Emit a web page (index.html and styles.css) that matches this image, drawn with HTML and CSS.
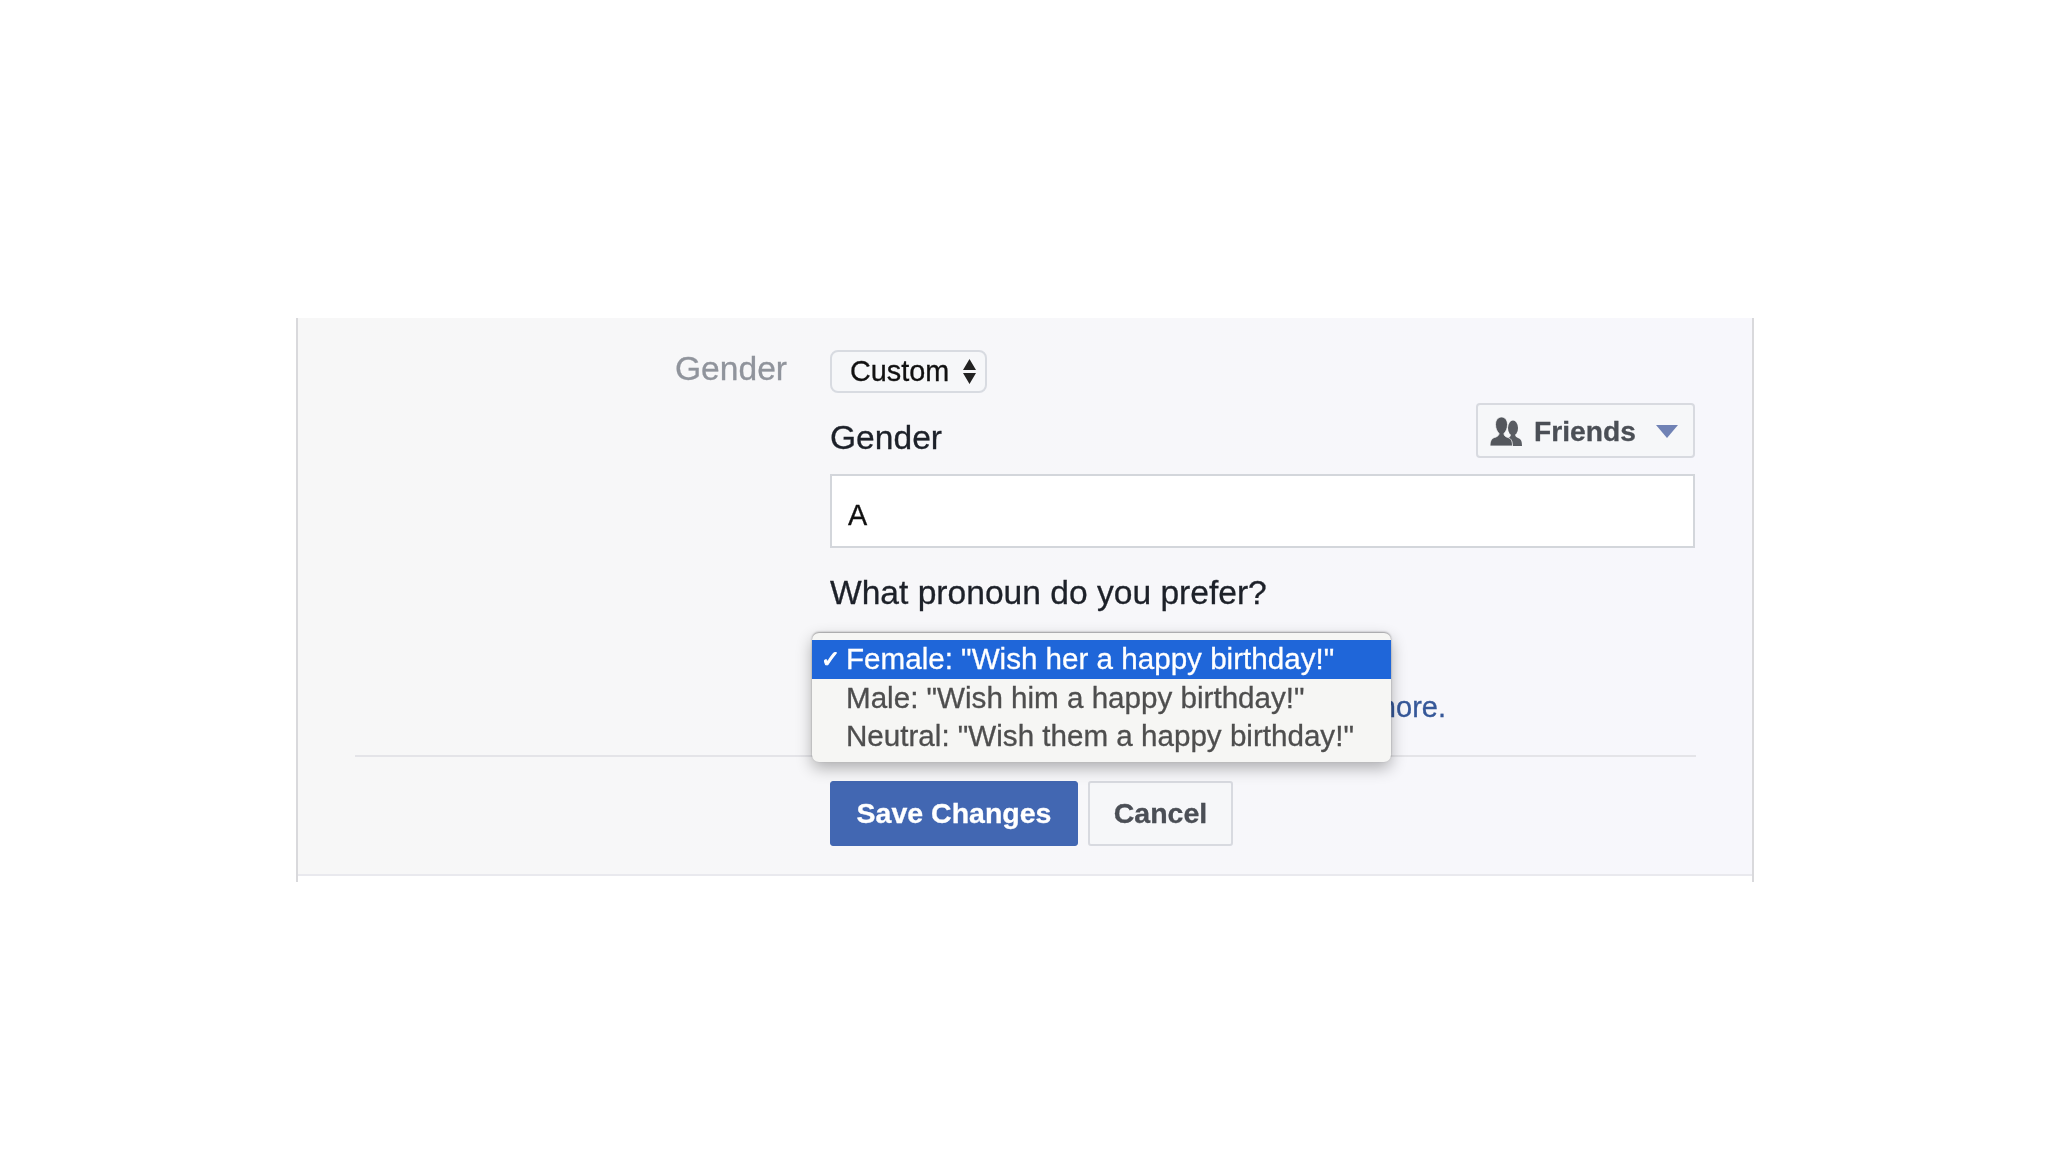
FILE: index.html
```html
<!DOCTYPE html>
<html lang="en">
<head>
  <meta charset="UTF-8">
  <title>Gender settings</title>
  <link rel="stylesheet" href="styles.css">
</head>
<body>
  <div class="panel">
    <div class="panel-body">
      <div class="form-row">
        <div class="form-label">Gender</div>
        <div class="form-content">
          <div class="custom-select">
            <span>Custom</span>
            <svg class="updown" width="13" height="25" viewBox="0 0 13 25"><path d="M6.5 0L13 11H0zM0 14h13L6.5 25z" fill="#222"/></svg>
          </div>

          <div class="title-row">
            <div class="field-title">Gender</div>
            <div class="audience-btn">
              <svg class="friends-icon" width="32" height="29" viewBox="0 0 32 29">
                <g fill="#5a5d63">
                  <ellipse cx="23" cy="11" rx="5" ry="7.500"/>
                  <path d="M32 29c0-5-1-7-4-8-2-1-3-2-3-4h-4c0 2-1 3-3 4v8z"/>
                </g>
                <path fill="#54575d" stroke="#f6f7f9" stroke-width="0.800" d="M0 29c0-6 2-8 6-9 2-1 3-2 3-3.500C7 14.500 5.500 11.500 5.500 7.500 5.500 3 8 0 11.500 0s6 3 6 7.500c0 4-1.500 7-3.500 9 0 1.500 .5 2.500 2.500 3.500 4 1 6 3 6 9z"/>
              </svg>
              <span class="audience-text">Friends</span>
              <span class="caret"></span>
            </div>
          </div>

          <div class="text-input">A</div>

          <div class="field-title pronoun-title">What pronoun do you prefer?</div>
          <div class="pronoun-field">
            <div class="pronoun-menu">
              <div class="menu-item selected"><span class="check">✓</span>Female: "Wish her a happy birthday!"</div>
              <div class="menu-item">Male: "Wish him a happy birthday!"</div>
              <div class="menu-item">Neutral: "Wish them a happy birthday!"</div>
            </div>
          </div>
          <div class="pronoun-note"><a href="#">more.</a></div>
        </div>
      </div>

      <div class="divider"></div>

      <div class="actions">
        <button class="btn btn-primary">Save Changes</button>
        <button class="btn btn-cancel">Cancel</button>
      </div>
    </div>
  </div>
</body>
</html>
```

FILE: styles.css
```css
* {
  margin: 0;
  padding: 0;
  box-sizing: border-box;
}

body {
  font-family: "Liberation Sans", Arial, sans-serif;
  background: #fff;
  color: #1d2129;
}

/* the reference is a soft, slightly blurred capture */
.panel {
  margin: 318px 0 0 296px;
  width: 1458px;
  height: 564px;
  border-left: 2px solid #d9d9dc;
  border-right: 2px solid #d9d9dc;
  filter: blur(0.5px);
  -webkit-text-stroke: 0.3px currentColor;
}

.panel-body {
  height: 558px;
  padding-top: 32px;
  background: linear-gradient(90deg, #f7f7f7 0%, #f7f7fc 100%);
  border-bottom: 2px solid #e9e9ee;
}

.form-row {
  display: flex;
  gap: 43px;
}

.form-label {
  width: 489px;
  text-align: right;
  font-size: 33.6px;
  line-height: 38px;
  color: #90949c;
}

.form-content {
  width: 865px;
}

.custom-select {
  display: flex;
  align-items: center;
  justify-content: space-between;
  width: 157px;
  height: 43px;
  padding: 0 9px 0 18px;
  background: #f6f7f9;
  border: 2px solid #d8dbe1;
  border-radius: 8px;
  font-size: 28.8px;
  color: #111;
}

.title-row {
  display: flex;
  justify-content: space-between;
  align-items: flex-start;
  margin-top: 10px;
}

.field-title {
  font-size: 33.6px;
  line-height: 40px;
  color: #1d2129;
}

.title-row .field-title {
  padding-top: 15px;
}

.audience-btn {
  display: flex;
  align-items: center;
  width: 219px;
  height: 55px;
  padding: 2px 0 0 12px;
  background: #f6f7f9;
  border: 2px solid #d8dae0;
  border-radius: 4px;
}

.friends-icon {
  flex: none;
}

.audience-text {
  margin-left: 12px;
  font-size: 28.2px;
  font-weight: bold;
  color: #4b4f56;
}

.caret {
  margin-left: 20px;
  border-left: 11px solid transparent;
  border-right: 11px solid transparent;
  border-top: 13px solid #7082b5;
}

.text-input {
  height: 74px;
  margin-top: 16px;
  padding: 21px 0 0 16px;
  background: #fff;
  border: 2px solid #d3d6db;
  font-size: 28.8px;
  line-height: 36px;
  color: #111;
}

.pronoun-title {
  margin-top: 25px;
}

.pronoun-field {
  position: relative;
  height: 74px;
}

.pronoun-menu {
  position: absolute;
  top: 20px;
  left: -18px;
  z-index: 2;
  width: 579px;
  height: 129px;
  padding-top: 7px;
  background: #f6f6f4;
  border-radius: 7px;
  box-shadow: 0 -1px 2px rgba(0, 0, 0, 0.35), 0 6px 16px rgba(0, 0, 0, 0.3);
}

.menu-item {
  position: relative;
  height: 38.7px;
  padding-left: 34px;
  font-size: 29.6px;
  line-height: 38px;
  color: #4e4e4e;
  white-space: nowrap;
}

.menu-item.selected {
  background: #1f66d9;
  color: #fff;
}

.check {
  position: absolute;
  left: 9px;
  font-family: "DejaVu Sans", sans-serif;
  font-size: 23px;
  font-weight: bold;
  -webkit-text-stroke: 1px currentColor;
}

.pronoun-note {
  width: 616px;
  height: 41px;
  text-align: right;
  font-size: 29px;
  line-height: 40px;
}

.pronoun-note a {
  color: #365899;
  text-decoration: none;
}

.divider {
  width: 1341px;
  height: 2px;
  margin: 27px 0 0 57px;
  background: #e4e4e8;
}

.actions {
  display: flex;
  gap: 10px;
  margin: 24px 0 0 532px;
}

.btn {
  height: 65px;
  border-radius: 3px;
  font-family: inherit;
  font-size: 28.5px;
  font-weight: bold;
}

.btn-primary {
  width: 248px;
  background: #4267b2;
  border: 1px solid #4267b2;
  color: #fff;
}

.btn-cancel {
  width: 145px;
  background: #f6f7f9;
  border: 2px solid #d8dae0;
  color: #4b4f56;
}
```
